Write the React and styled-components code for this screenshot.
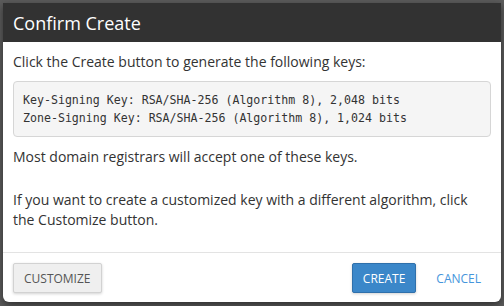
import React from "react";
import styled, { createGlobalStyle } from "styled-components";

const GlobalStyle = createGlobalStyle`
  html, body {
    margin: 0;
    height: 100%;
    background: #5c5c5c;
  }
  body {
    padding: 3px 3px 0 3px;
    box-sizing: border-box;
    font-family: "Open Sans", "Liberation Sans", sans-serif;
  }
`;

const Dialog = styled.div`
  width: 498px;
  background: #fff;
  border-radius: 0 0 6px 6px;
  overflow: hidden;
  box-shadow: 0 3px 9px rgba(0, 0, 0, 0.5);
`;

const Header = styled.div`
  height: 39px;
  background: #323232;
  display: flex;
  align-items: center;
  padding: 0 10px;
`;

const Title = styled.h4`
  margin: 0;
  color: #fff;
  font-size: 18px;
  font-weight: 400;
  line-height: 1;
`;

const Body = styled.div`
  padding: 10px 10px 22px 10px;
  color: #333;
  font-size: 14px;
  line-height: 20px;
`;

const Para = styled.p`
  margin: 0 0 ${(p) => p.$gap || 0}px 0;
`;

const KeyBox = styled.pre`
  margin: 0 0 10px 0;
  padding: 9px 9px;
  background: #f5f5f5;
  border: 1px solid #d6d6d6;
  border-radius: 4px;
  font-family: "DejaVu Sans Mono", "Liberation Mono", monospace;
  font-size: 11.6px;
  line-height: 18px;
  color: #333;
`;

const Footer = styled.div`
  border-top: 1px solid #e3e3e3;
  padding: 10px 10px 9px 10px;
  display: flex;
  align-items: center;
`;

const Spacer = styled.div`
  flex: 1;
`;

const Button = styled.button`
  height: 30px;
  padding: 0 10px;
  font-family: "Open Sans", "Liberation Sans", sans-serif;
  font-size: 12px;
  text-transform: uppercase;
  border-radius: 2px;
  cursor: pointer;
  border: 1px solid ${(p) => (p.$primary ? "#2f70ab" : "#d2d2d2")};
  background: ${(p) => (p.$primary ? "#3b87c9" : "#efefef")};
  color: ${(p) => (p.$primary ? "#fff" : "#555")};
  box-shadow: 0 1px 3px rgba(0, 0, 0, 0.18);
`;

const LinkButton = styled.button`
  height: 30px;
  margin-left: 10px;
  padding: 0 10px;
  border: none;
  background: none;
  font-family: "Open Sans", "Liberation Sans", sans-serif;
  font-size: 12px;
  text-transform: uppercase;
  color: #4595dc;
  cursor: pointer;
`;

export default function App() {
  return (
    <>
      <GlobalStyle />
      <Dialog>
        <Header>
          <Title>Confirm Create</Title>
        </Header>
        <Body>
          <Para $gap={9}>Click the Create button to generate the following keys:</Para>
          <KeyBox>
            {"Key-Signing Key: RSA/SHA-256 (Algorithm 8), 2,048 bits\nZone-Signing Key: RSA/SHA-256 (Algorithm 8), 1,024 bits"}
          </KeyBox>
          <Para $gap={23}>Most domain registrars will accept one of these keys.</Para>
          <Para>
            If you want to create a customized key with a different algorithm, click the Customize button.
          </Para>
        </Body>
        <Footer>
          <Button>Customize</Button>
          <Spacer />
          <Button $primary>Create</Button>
          <LinkButton>Cancel</LinkButton>
        </Footer>
      </Dialog>
    </>
  );
}
